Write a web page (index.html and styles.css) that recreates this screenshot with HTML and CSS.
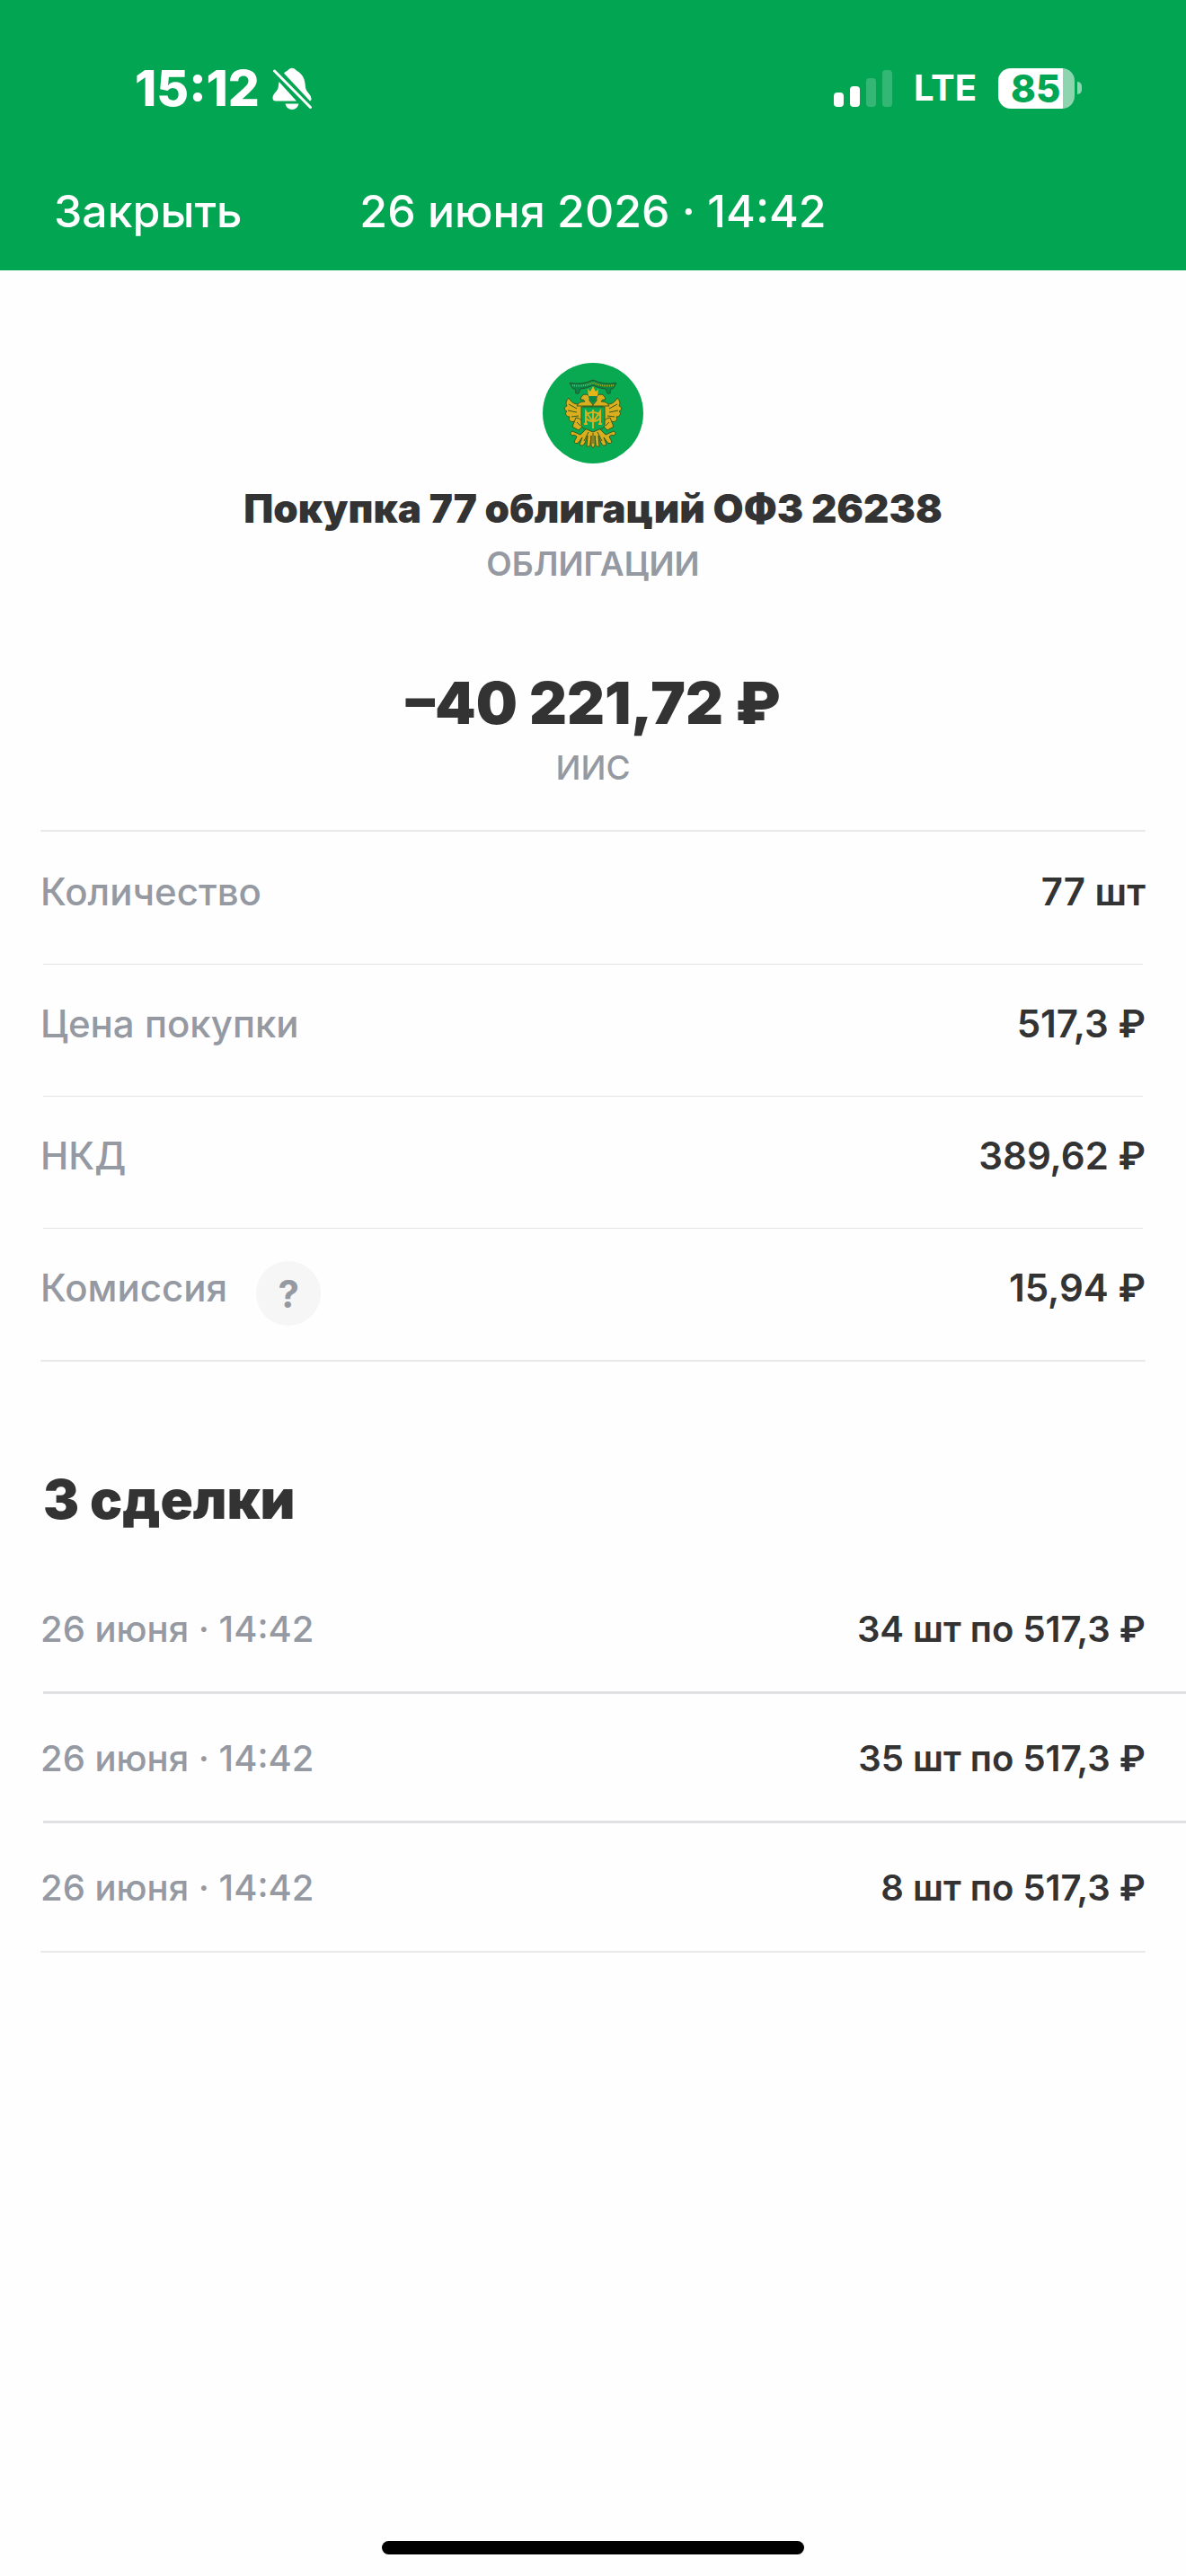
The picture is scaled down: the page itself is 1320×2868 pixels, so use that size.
FILE: index.html
```html
<!DOCTYPE html>
<html lang="ru">
<head>
<meta charset="utf-8">
<title>Покупка 77 облигаций ОФЗ 26238</title>
<meta name="viewport" content="width=device-width, initial-scale=1.0">
<link rel="stylesheet" href="styles.css">
</head>
<body>

<header class="header">
    <div class="status-bar">
        <div class="status-left">
            <span class="clock">15:12</span>
            <svg class="bell" viewBox="0 0 44 47" aria-hidden="true">
                <path fill="#fff" d="M13 6.5 C15 4.500 16 4.500 17.500 3 Q22 -1.500 26.500 3 C28 4.500 29 4.500 31 6.500 C36 11 36.500 17 37 22 C37.500 28 44 30 43.500 36 L42 37.500 Z"/>
                <path fill="#fff" d="M7.500 16 L27 37.500 H4 Q0.500 37.500 0.500 34 C0.500 29 6 27 6.700 22 Z"/>
                <path fill="#fff" d="M14.500 40.500 H29.500 Q28 47 22 47 Q16 47 14.500 40.500 Z"/>
                <path stroke="#fff" stroke-width="3" stroke-linecap="round" d="M2.500 4 L42.500 44.500"/>
            </svg>
        </div>
        <div class="status-right">
            <div class="signal">
                <span class="bar bar-1"></span>
                <span class="bar bar-2"></span>
                <span class="bar bar-3 weak"></span>
                <span class="bar bar-4 weak"></span>
            </div>
            <span class="network">LTE</span>
            <div class="battery">
                <span class="battery-level">85</span>
                <span class="battery-cap"></span>
            </div>
        </div>
    </div>
    <nav class="nav-bar">
        <button type="button" class="close">Закрыть</button>
        <h1 class="nav-title">26 июня 2026 · 14:42</h1>
    </nav>
</header>

<main>
    <section class="summary">
        <svg class="emblem" viewBox="0 0 112 112" aria-hidden="true">
            <circle cx="56" cy="56" r="56" fill="#08a951"/>
            <g fill="#d9ae1f" stroke="#3b5a1c" stroke-width="1">
                <!-- wings -->
                <path d="M43 45 C36 48 31 43 29 39 C25 43 26 46 27 48 C23 49 24 53 27 54 C24 56 26 60 30 60 C28 63 31 67 36 65 C36 69 41 69 43 66 L47 50 Z"/>
                <path d="M69 45 C76 48 81 43 83 39 C87 43 86 46 85 48 C89 49 88 53 85 54 C88 56 86 60 82 60 C84 63 81 67 76 65 C76 69 71 69 69 66 L65 50 Z"/>
                <!-- heads -->
                <path d="M42 41 Q43 35 48 35 Q53 36 52 42 L57 48 H38 Q40 43 47 43 Q46 40 42 41 Z"/>
                <path d="M70 41 Q69 35 64 35 Q59 36 60 42 L55 48 H74 Q72 43 65 43 Q66 40 70 41 Z"/>
                <!-- claws -->
                <path d="M37 61 Q45 62 45 70 L40 75 L33 71 Z"/>
                <path d="M75 61 Q67 62 67 70 L72 75 L79 71 Z"/>
                <!-- tail -->
                <path d="M49 73 L42 80 L33 76 Q29 79 33 81 Q35 79 38 82 L35 88 Q38 92 41 87 L44 83 L41 91 Q45 94 47 89 L50 81 L49 93 Q53 94 53 90 L54 81 L54 92 L56 95 L58 92 L58 81 L59 90 Q59 94 63 93 L62 81 L65 89 Q67 94 71 91 L68 83 L71 87 Q74 92 77 88 L74 82 Q77 79 79 81 Q83 79 79 76 L70 80 L63 73 Z"/>
            </g>
            <path fill="none" stroke="#3b5a1c" stroke-width="1" d="M29 46 L38 51 M28 53 L38 55 M32 60 L40 59 M83 46 L74 51 M84 53 L74 55 M80 60 L72 59 M38 66 L42 70 M74 66 L70 70 M51 77 L46 87 M61 77 L66 87 M56 78 V90"/>
            <!-- shield -->
            <path fill="#08a951" stroke="#3b5a1c" stroke-width="1" d="M43 49 H69 V69 Q69 73 63 74 L56 77 L49 74 Q43 73 43 69 Z"/>
            <path fill="none" stroke="#d9ae1f" stroke-width="2" d="M48 68 V54 L56 66 L64 54 V68 M56 52 V73 M46 68 H50 M62 68 H66"/>
            <ellipse cx="56" cy="60" rx="8" ry="5" fill="none" stroke="#d9ae1f" stroke-width="2"/>
            <!-- ribbon -->
            <path fill="#078745" stroke="#25582c" stroke-width="1" d="M30 22 Q43 25 56 19 Q69 25 82 22 L79 28 Q76 29 75 31 Q77 35 72 34 L70 29 Q61 28 56 25 Q51 28 42 29 L40 34 Q35 35 37 31 Q36 29 33 28 Z"/>
            <path fill="none" stroke="#9daf2e" stroke-width="2" stroke-dasharray="1 1" d="M33 25 Q45 27 56 22 Q67 27 79 25"/>
            <!-- crown -->
            <path fill="#e6b51c" d="M50 29 L53 32 L56 26 L59 32 L62 29 L61 37 H51 Z"/>
            <path fill="#078745" d="M52 37 H60 V41 L56 45 L52 41 Z"/>
        </svg>
        <h2 class="summary-title">Покупка 77 облигаций ОФЗ 26238</h2>
        <p class="summary-type">ОБЛИГАЦИИ</p>
        <p class="amount">–40 221,72 ₽</p>
        <p class="account">ИИС</p>
    </section>

    <dl class="details">
        <div class="detail">
            <dt>Количество</dt>
            <dd>77 шт</dd>
        </div>
        <div class="detail">
            <dt>Цена покупки</dt>
            <dd>517,3 ₽</dd>
        </div>
        <div class="detail">
            <dt>НКД</dt>
            <dd>389,62 ₽</dd>
        </div>
        <div class="detail">
            <dt>Комиссия <button type="button" class="help">?</button></dt>
            <dd>15,94 ₽</dd>
        </div>
    </dl>

    <section class="deals">
        <h2 class="deals-title">3 сделки</h2>
        <ul class="deal-list">
            <li class="deal">
                <time>26 июня · 14:42</time>
                <span class="deal-value">34 шт по 517,3 ₽</span>
            </li>
            <li class="deal">
                <time>26 июня · 14:42</time>
                <span class="deal-value">35 шт по 517,3 ₽</span>
            </li>
            <li class="deal">
                <time>26 июня · 14:42</time>
                <span class="deal-value">8 шт по 517,3 ₽</span>
            </li>
        </ul>
    </section>
</main>

<footer class="footer">
    <div class="home-indicator"></div>
</footer>

</body>
</html>
```

FILE: styles.css
```css
* {
    box-sizing: border-box;
}
body {
    margin: 0;
    min-height: 100vh;
    display: flex;
    flex-direction: column;
    font-family: Inter, "Noto Sans", sans-serif;
    background-color: #fefefe;
    color: #333333;
}
h1, h2, p, ul, dl, dd {
    margin: 0;
    padding: 0;
}
button {
    border: none;
    padding: 0;
    font-family: inherit;
    cursor: pointer;
}

/* Header */
.header {
    background-color: #02a652;
    color: #ffffff;
    padding: 68px 0 36px;
}
.status-bar {
    display: flex;
    justify-content: space-between;
    align-items: center;
    height: 60px;
    padding: 0 116px 0 150px;
}
.status-left {
    display: flex;
    align-items: center;
    gap: 14px;
}
.clock {
    font-size: 55px;
    font-weight: 800;
    line-height: 60px;
}
.bell {
    width: 44px;
    height: 47px;
}
.status-right {
    display: flex;
    align-items: center;
    gap: 24px;
}
.signal {
    display: flex;
    align-items: flex-end;
    gap: 7px;
    height: 42px;
}
.bar {
    width: 11px;
    border-radius: 4px;
    background-color: #ffffff;
}
.bar-1 {
    height: 16px;
}
.bar-2 {
    height: 23px;
}
.bar-3 {
    height: 32px;
}
.bar-4 {
    height: 41px;
}
.weak {
    opacity: 0.2;
}
.network {
    font-size: 40px;
    font-weight: 700;
    line-height: 60px;
}
.battery {
    display: flex;
    align-items: center;
    gap: 3px;
}
.battery-level {
    width: 85px;
    height: 45px;
    padding-left: 14px;
    border-radius: 14px;
    background: linear-gradient(to right, #ffffff 85%, #8dd5af 85%);
    color: #02a652;
    font-size: 42px;
    font-weight: 800;
    line-height: 45px;
}
.battery-cap {
    width: 5px;
    height: 14px;
    border-radius: 0 5px 5px 0;
    background-color: #8dd5af;
}
.nav-bar {
    display: grid;
    grid-template-columns: 1fr auto 1fr;
    align-items: center;
    margin-top: 77px;
    padding: 0 60px;
    height: 60px;
}
.close {
    justify-self: start;
    background: none;
    color: #ffffff;
    font-size: 50px;
    font-weight: 500;
    line-height: 60px;
}
.nav-title {
    font-size: 50px;
    font-weight: 500;
    line-height: 60px;
}

/* Summary */
.summary {
    display: flex;
    flex-direction: column;
    align-items: center;
    padding: 103px 45px 45px;
    text-align: center;
}
.emblem {
    width: 112px;
    height: 112px;
}
.summary-title {
    margin-top: 20px;
    font-size: 44px;
    font-weight: 900;
    line-height: 60px;
}
.summary-type,
.account {
    color: #9599a2;
    font-size: 37px;
    line-height: 48px;
}
.summary-type {
    margin-top: 8px;
    font-weight: 600;
}
.amount {
    margin-top: 93px;
    font-size: 65px;
    font-weight: 900;
    line-height: 76px;
}
.account {
    margin-top: 10px;
    font-weight: 500;
}

/* Details */
.details {
    margin: 0 45px;
    border-top: 2px solid #e9e9eb;
    border-bottom: 2px solid #e9e9eb;
}
.detail {
    display: flex;
    justify-content: space-between;
    height: 147px;
    padding-top: 41px;
    font-size: 42px;
    line-height: 52px;
}
/* divider is slightly inset from the row edges */
.detail + .detail {
    background: linear-gradient(#e4e4e6, #e4e4e6) top center / calc(100% - 6px) 1px no-repeat;
}
.detail dt {
    display: flex;
    gap: 32px;
    color: #9599a2;
    font-weight: 500;
}
.detail dd {
    font-weight: 600;
}
.help {
    width: 72px;
    height: 72px;
    margin-top: -4px;
    border-radius: 50%;
    background-color: #f6f6f7;
    color: #9599a2;
    font-size: 42px;
    font-weight: 700;
}

/* Deals */
.deals-title {
    padding: 115px 48px 0;
    font-size: 60px;
    font-weight: 900;
    line-height: 76px;
}
.deal-list {
    margin-top: 35px;
    list-style: none;
}
.deal {
    display: flex;
    justify-content: space-between;
    height: 144px;
    margin-left: 45px;
    padding: 46px 45px 0 0;
    background: linear-gradient(#e0e0e2, #e0e0e2) bottom right / calc(100% - 3px) 3px no-repeat;
    font-size: 40px;
    line-height: 52px;
}
.deal:last-child {
    margin-right: 45px;
    padding-right: 0;
    background: none;
    border-bottom: 2px solid #e9e9eb;
}
.deal time {
    color: #9599a2;
    font-weight: 500;
}
.deal-value {
    font-weight: 600;
}

/* Home indicator */
.footer {
    display: flex;
    justify-content: center;
    margin-top: auto;
    padding-bottom: 24px;
}
.home-indicator {
    width: 470px;
    height: 15px;
    border-radius: 8px;
    background-color: #000000;
}
```
